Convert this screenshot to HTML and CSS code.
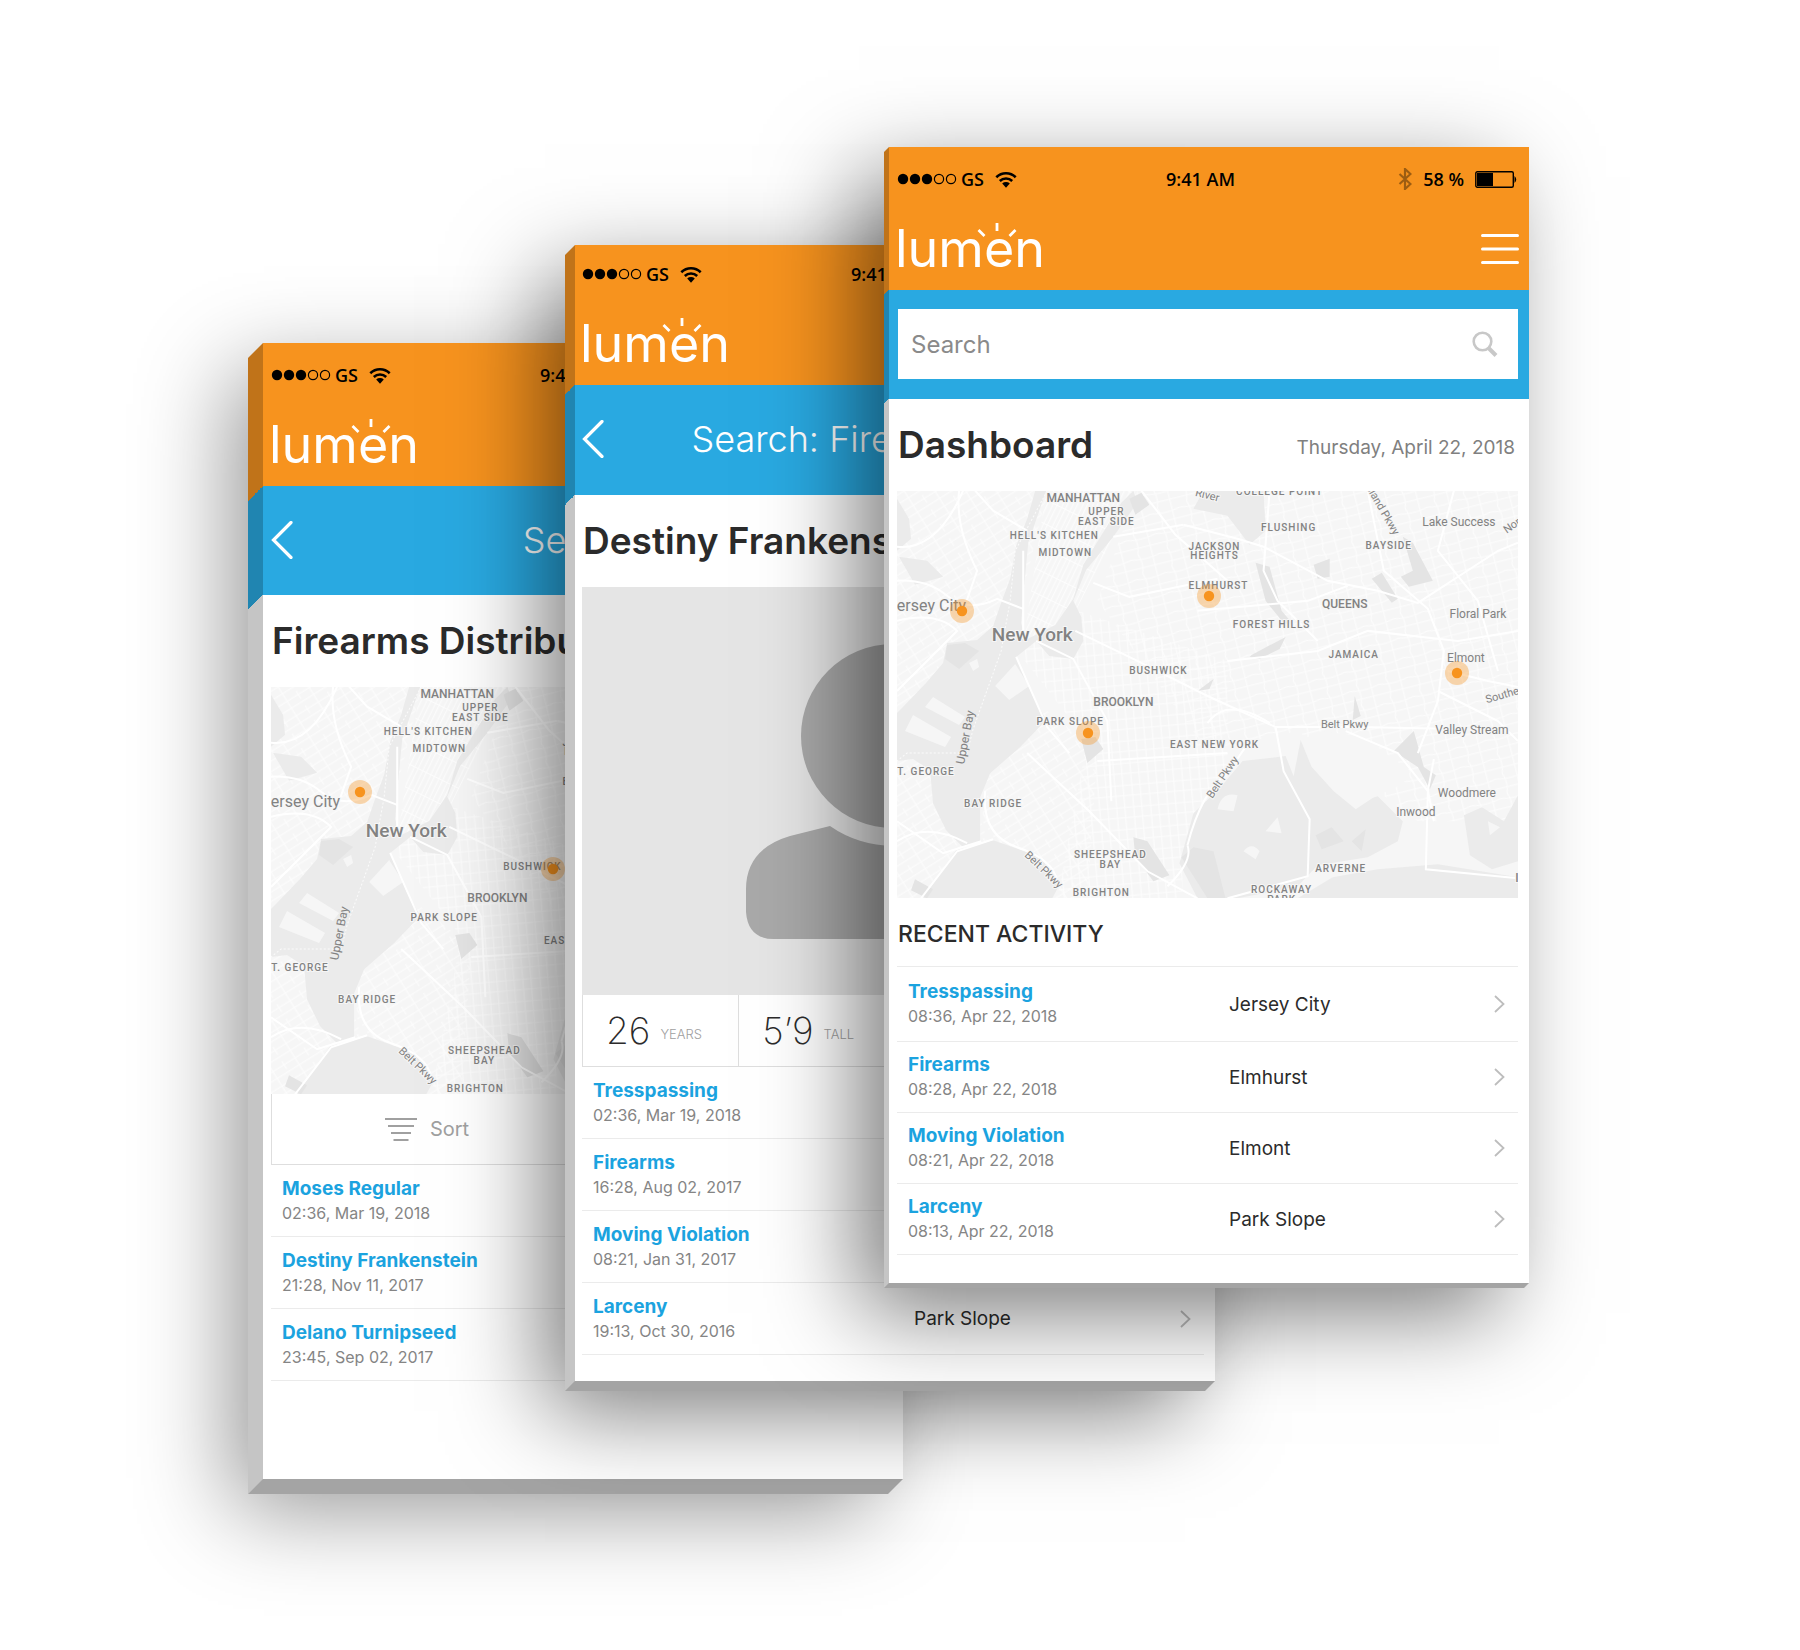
FILE: index.html
```html
<!DOCTYPE html>
<html lang="en">
<head>
<meta charset="utf-8">
<meta name="viewport" content="width=device-width, initial-scale=1">
<title>Lumen mobile screens</title>
<link rel="stylesheet" href="styles.css">
</head>
<body>

<svg class="sprite" aria-hidden="true">
  <defs>
    <symbol id="i-signal" viewBox="0 0 60 12">
      <circle cx="6" cy="6" r="5.2"/><circle cx="18" cy="6" r="5.2"/><circle cx="30" cy="6" r="5.2"/>
      <g fill="none" stroke="currentColor" stroke-width="1.2"><circle cx="42" cy="6" r="4.6"/><circle cx="54" cy="6" r="4.6"/></g>
    </symbol>
    <symbol id="i-wifi" viewBox="0 0 22 17">
      <g fill="none" stroke="currentColor" stroke-width="2.6"><path d="M1.3 6.2a14 14 0 0 1 19.4 0"/><path d="M4.8 10a9 9 0 0 1 12.4 0"/></g>
      <path d="M7.2 12.6a5.6 5.6 0 0 1 7.6 0L11 16.8z"/>
    </symbol>
    <symbol id="i-bluetooth" viewBox="0 0 14 22">
      <path d="M1.5 6l11 10L7 21V1l5.500 5L1.500 16" fill="none" stroke="currentColor" stroke-width="2.200"/>
    </symbol>
    <symbol id="i-battery" viewBox="0 0 43 17">
      <rect x=".8" y=".8" width="37.500" height="15.400" rx="1.500" fill="none" stroke="currentColor" stroke-width="1.400"/>
      <rect x="2" y="2" width="16" height="13"/><path d="M39.500 5q3.500 3.500 0 7z"/>
    </symbol>
    <symbol id="i-rays" viewBox="0 0 40 18">
      <path d="M20 1v8M1.500 8l6 6M38.500 8l-6 6" fill="none" stroke="currentColor" stroke-width="2.800"/>
    </symbol>
    <symbol id="i-menu" viewBox="0 0 38 32">
      <path d="M1.500 2.500h35M1.500 16h35M1.500 29.500h35" stroke="currentColor" stroke-width="3" stroke-linecap="round"/>
    </symbol>
    <symbol id="i-back" viewBox="0 0 22 38">
      <path d="M20 1.500L2.500 19 20 36.500" fill="none" stroke="currentColor" stroke-width="3.200" stroke-linecap="round"/>
    </symbol>
    <symbol id="i-next" viewBox="0 0 11 18">
      <path d="M1 1l8.500 8L1 17" fill="none" stroke="currentColor" stroke-width="1.800"/>
    </symbol>
    <symbol id="i-search" viewBox="0 0 26 26">
      <circle cx="10.500" cy="10.500" r="8.800" fill="none" stroke="currentColor" stroke-width="2.600"/>
      <path d="M16.500 17l7.500 7.500" stroke="currentColor" stroke-width="4"/>
    </symbol>
    <symbol id="i-sort" viewBox="0 0 32 24">
      <path d="M0 2h32M3 9h26M6 16h20M8.500 23h15" stroke="currentColor" stroke-width="2"/>
    </symbol>

    <pattern id="streets-a" width="26" height="17" patternUnits="userSpaceOnUse" patternTransform="rotate(-32)">
      <path d="M0 4h26M0 12h26M6 0v17M19 0v9" class="street"/>
    </pattern>
    <pattern id="streets-b" width="17" height="22" patternUnits="userSpaceOnUse" patternTransform="rotate(-5)">
      <path d="M0 5h17M0 15h17M4 0v22M12 0v22" class="street"/>
    </pattern>
    <pattern id="streets-c" width="9" height="22" patternUnits="userSpaceOnUse" patternTransform="rotate(26)">
      <path d="M0 9h9M2 0v22M6 0v22" class="street"/>
    </pattern>
    <pattern id="streets-d" width="30" height="20" patternUnits="userSpaceOnUse" patternTransform="rotate(-14)">
      <path d="M0 4q15 4 30 0M0 14h30M8 0q4 10 0 20M22 0v20" class="street"/>
    </pattern>

    <symbol id="city-map" viewBox="0 0 620 407" preserveAspectRatio="xMidYMid slice">
      <rect width="620" height="407" fill="#f6f6f6"/>
      <path d="M0 0H150L112 160 0 230z" fill="url(#streets-a)"/>
      <path d="M0 260H60L110 407H0z" fill="url(#streets-a)"/>
      <path d="M149 0H240L176 125 126 152z" fill="url(#streets-c)"/>
      <path d="M90 260L150 220 200 260 190 407H140L85 330z" fill="url(#streets-a)"/>
      <path d="M120 160L180 120 330 170 330 300 285 360 285 407H160L190 250z" fill="url(#streets-b)"/>
      <path d="M240 0H620V330H520L400 240 310 260 200 110z" fill="url(#streets-d)"/>

      <g fill="#ebebeb">
        <path d="M138 0L130 28 119 55 113 88 104 112 96 135 80 149 50 152 46 172 29 192 3 219 0 222V270L16 268 33 279 36 312 49 339 66 356 83 352 83 306 93 282 123 256 149 229 136 206 119 166 139 150 152 165 176 168 186 150 184 126 176 110 189 79 216 46 240 12 236 0 224 12 186 74 176 108 158 134 128 149 124 132 126 106 131 52 149 0z"/>
        <path d="M96 349L59 359 26 407H155L163 392 143 366 116 356z"/>
        <path d="M282 372L296 322 323 296 345 270 388 265 396 285 403 249 430 290 455 312 480 305 505 330 500 350 470 366 420 374 400 395 340 407H300z"/>
        <path d="M400 407L435 386 480 378 540 373 620 386V407z"/>
        <path d="M306 0H366L368 40 352 54 330 25 296 18z"/>
        <path d="M566 324l18-8 22 14 14-26v66l-26 8-22-14z"/>
        <path d="M0 8l12 20 2 20L0 60zM2 66l28 4 16 16-28 8z"/>
      </g>
      <g fill="#e4e4e4">
        <path d="M50 154l18-2 14 8-20 18-14-10zM284 366l12-10 20 4 12 47h-18z"/>
        <path d="M358 72l14 4 12 44 12 14-10-2-18-22zM416 74l16-6v18l-12 2zM474 88l10-6 16 26-6 4zM505 46l10 6 20 38-24 6-8-10 12-6z"/>
        <path d="M354 164l34-18-6 12-20 10-10-2zM300 200l16-12-4 10zM184 248l14-2 8 12-16 14z"/>
        <path d="M496 260l20-20 10 36 12 8-6 14-12-22zM236 346l14 4 22 34-16 6-18-24zM18 388l18 10-6 9-16-8zM457 205l6 20-8 4zM232 8l12-6 8 12-14 10z"/>
        <path d="M424 358l-6-14 16-8 12 14zM454 350l14-12-4 22z"/>
      </g>
      <g fill="#f6f6f6">
        <path d="M8 240l40 16 6-10-38-22zM28 216l34 18 6-8-32-20zM98 195l20-22 14 22-20 14zM72 172l8-4 2 8-6 4z"/>
        <path d="M403 249L424 240 466 246 512 280 506 292 476 306 458 318 436 300 414 276z"/>
        <path d="M320 318q4-18 20-14l-4 16zM346 360q8-10 16 0l-4 8zM368 340l12-14 4 16zM590 330l12 6-10 8z"/>
      </g>

      <g class="road">
        <path d="M-2 90Q30 88 50 105T100 108L126 118M0 56Q40 60 66 0M78 0L96 20 130 40M62 0Q58 36 80 80L66 120M0 130Q40 120 60 140L0 200"/>
        <path d="M126 60V148M119 166L150 236 172 262M96 348L60 360 24 407M0 330L46 362 84 350"/>
        <path d="M139 150L176 168 210 230 214 310M196 92L232 106 262 100 320 88M216 46L286 34"/>
        <path d="M178 140L240 170 310 205 378 236 460 236 560 238M0 350Q30 330 70 352"/>
        <path d="M286 34L340 48 366 56 430 90 480 100 520 112 600 60 620 52M372 0L366 80 380 110 420 150M470 0L486 80 530 118 546 160 540 210 520 262"/>
        <path d="M244 0L278 44 330 90M300 120L410 110 450 95M330 170L420 160 470 140 560 150 620 140M310 232Q330 205 372 232"/>
        <path d="M378 236L386 280 412 328 410 385 330 407M536 268L530 300 528 378 620 387M448 240L500 262 530 300 536 330"/>
        <path d="M540 200L600 230 620 250M550 180L590 190 620 196M556 0L540 60 580 110 600 180M290 354Q304 300 330 282L352 250M270 395Q296 370 290 354"/>
        <path d="M88 300Q84 344 120 356T160 390M130 262L192 320 250 380 300 407M200 270L330 262"/>
      </g>
      <path d="M150 0L118 60 113 110 104 160 76 238 70 262H10L0 270" class="ferry"/>

      <g class="area" text-anchor="middle">
        <text x="209" y="24">UPPER</text><text x="209" y="34">EAST SIDE</text>
        <text x="157" y="48">HELL'S KITCHEN</text><text x="168" y="65">MIDTOWN</text>
        <text x="261" y="183">BUSHWICK</text><text x="173" y="234">PARK SLOPE</text>
        <text x="317" y="257">EAST NEW YORK</text><text x="29" y="284">T. GEORGE</text>
        <text x="96" y="316">BAY RIDGE</text><text x="213" y="367">SHEEPSHEAD</text><text x="213" y="377">BAY</text>
        <text x="204" y="405">BRIGHTON</text><text x="382" y="4">COLLEGE POINT</text>
        <text x="391" y="40">FLUSHING</text><text x="317" y="59">JACKSON</text><text x="317" y="68">HEIGHTS</text>
        <text x="321" y="98">ELMHURST</text><text x="491" y="58">BAYSIDE</text>
        <text x="374" y="137">FOREST HILLS</text><text x="456" y="167">JAMAICA</text>
        <text x="443" y="381">ARVERNE</text><text x="384" y="402">ROCKAWAY</text><text x="384" y="412">PARK</text>
      </g>
      <g class="borough" text-anchor="middle">
        <text x="186" y="11">MANHATTAN</text><text x="226" y="215">BROOKLYN</text><text x="447" y="117">QUEENS</text>
        <text x="619" y="391">I</text>
      </g>
      <g class="town" text-anchor="middle">
        <text x="561" y="35">Lake Success</text><text x="580" y="127">Floral Park</text><text x="568" y="171">Elmont</text>
        <text x="574" y="243">Valley Stream</text><text x="569" y="306">Woodmere</text><text x="518" y="325">Inwood</text>
      </g>
      <text x="69" y="120" class="city" text-anchor="end">ersey City</text>
      <text x="135" y="150" class="metro" text-anchor="middle">New York</text>
      <g class="way" text-anchor="middle">
        <text transform="translate(72 247) rotate(-79)" class="bay">Upper Bay</text>
        <text transform="translate(447 237)">Belt Pkwy</text>
        <text transform="translate(328 288) rotate(-56)">Belt Pkwy</text>
        <text transform="translate(144 381) rotate(44)">Belt Pkwy</text>
        <text transform="translate(309 8) rotate(14)">River</text>
        <text transform="translate(482 21) rotate(60)">sland Pkwy</text>
        <text transform="translate(616 38) rotate(-35)">Nor</text>
        <text transform="translate(607 207) rotate(-16)">Souther</text>
      </g>
    </symbol>
    <symbol id="pin" viewBox="0 0 24 24">
      <circle cx="12" cy="12" r="12" fill="#f7931e" fill-opacity=".35"/><circle cx="12" cy="12" r="5.200" fill="#f7931e"/>
    </symbol>
  </defs>
</svg>

<main class="stage">

  <section class="phone phone--back" aria-label="Firearms distribution">
    <div class="screen">
      <div class="status">
        <span class="status-group"><svg class="signal"><use href="#i-signal"/></svg>GS<svg class="wifi"><use href="#i-wifi"/></svg></span>
        <span>9:41</span>
        <span class="status-group status-end"><svg class="battery"><use href="#i-battery"/></svg></span>
      </div>
      <header class="brand">
        <a class="logo" href="#">lumen<svg class="rays" aria-hidden="true"><use href="#i-rays"/></svg></a>
        <button class="icon-button" aria-label="Menu"><svg class="menu"><use href="#i-menu"/></svg></button>
      </header>
      <nav class="bar">
        <button class="icon-button" aria-label="Back"><svg class="back"><use href="#i-back"/></svg></button>
        <span class="bar-title">Search</span>
      </nav>
      <div class="heading"><h1>Firearms Distribution</h1></div>
      <div class="content">
        <div class="map">
          <svg class="map-canvas" role="img" aria-label="Map of New York"><use href="#city-map"/></svg>
          <svg class="pin pin--hoboken"><use href="#pin"/></svg>
          <svg class="pin pin--bushwick"><use href="#pin"/></svg>
        </div>
        <div class="cells cells--two">
          <button class="cell tool"><svg class="sort"><use href="#i-sort"/></svg>Sort</button>
          <div class="cell"></div>
        </div>
        <ul class="rows">
          <li><a class="row" href="#"><span class="event"><strong>Moses Regular</strong><small>02:36, Mar 19, 2018</small></span></a></li>
          <li><a class="row" href="#"><span class="event"><strong>Destiny Frankenstein</strong><small>21:28, Nov 11, 2017</small></span></a></li>
          <li><a class="row" href="#"><span class="event"><strong>Delano Turnipseed</strong><small>23:45, Sep 02, 2017</small></span></a></li>
        </ul>
      </div>
    </div>
  </section>

  <section class="phone phone--middle" aria-label="Destiny Frankenstein">
    <div class="screen">
      <div class="status">
        <span class="status-group"><svg class="signal"><use href="#i-signal"/></svg>GS<svg class="wifi"><use href="#i-wifi"/></svg></span>
        <span>9:41</span>
        <span class="status-group status-end"><svg class="battery"><use href="#i-battery"/></svg></span>
      </div>
      <header class="brand">
        <a class="logo" href="#">lumen<svg class="rays" aria-hidden="true"><use href="#i-rays"/></svg></a>
        <button class="icon-button" aria-label="Menu"><svg class="menu"><use href="#i-menu"/></svg></button>
      </header>
      <nav class="bar">
        <button class="icon-button" aria-label="Back"><svg class="back"><use href="#i-back"/></svg></button>
        <span class="bar-title">Search: Firearms Dealer</span>
      </nav>
      <div class="heading"><h1>Destiny Frankenstein</h1></div>
      <div class="content">
        <svg class="portrait" viewBox="0 0 622 408" role="img" aria-label="No photo">
          <circle cx="311" cy="149" r="92"/>
          <path d="M248 239L208 249Q164 262 164 302V325Q166 352 192 352H430Q456 352 458 325V302Q458 262 414 249L374 239A110 110 0 0 1 248 239z"/>
        </svg>
        <div class="cells">
          <div class="cell stat"><b>26</b><span>YEARS</span></div>
          <div class="cell stat"><b>5’9</b><span>TALL</span></div>
          <div class="cell"></div>
          <div class="cell"></div>
        </div>
        <ul class="rows">
          <li><a class="row" href="#"><span class="event"><strong>Tresspassing</strong><small>02:36, Mar 19, 2018</small></span></a></li>
          <li><a class="row" href="#"><span class="event"><strong>Firearms</strong><small>16:28, Aug 02, 2017</small></span></a></li>
          <li><a class="row" href="#"><span class="event"><strong>Moving Violation</strong><small>08:21, Jan 31, 2017</small></span></a></li>
          <li><a class="row" href="#"><span class="event"><strong>Larceny</strong><small>19:13, Oct 30, 2016</small></span><span class="place">Park Slope</span><svg class="next"><use href="#i-next"/></svg></a></li>
        </ul>
      </div>
    </div>
  </section>

  <section class="phone phone--front" aria-label="Dashboard">
    <div class="screen">
      <div class="status">
        <span class="status-group"><svg class="signal"><use href="#i-signal"/></svg>GS<svg class="wifi"><use href="#i-wifi"/></svg></span>
        <span>9:41 AM</span>
        <span class="status-group status-end"><svg class="bluetooth"><use href="#i-bluetooth"/></svg>58 %<svg class="battery"><use href="#i-battery"/></svg></span>
      </div>
      <header class="brand">
        <a class="logo" href="#">lumen<svg class="rays" aria-hidden="true"><use href="#i-rays"/></svg></a>
        <button class="icon-button" aria-label="Menu"><svg class="menu"><use href="#i-menu"/></svg></button>
      </header>
      <form class="bar">
        <label class="search"><input type="search" placeholder="Search" aria-label="Search"><svg class="search-icon"><use href="#i-search"/></svg></label>
      </form>
      <div class="heading"><h1>Dashboard</h1><time datetime="2018-04-22">Thursday, April 22, 2018</time></div>
      <div class="content">
        <div class="map">
          <svg class="map-canvas" role="img" aria-label="Map of New York"><use href="#city-map"/></svg>
          <svg class="pin pin--jersey"><use href="#pin"/></svg>
          <svg class="pin pin--elmhurst"><use href="#pin"/></svg>
          <svg class="pin pin--slope"><use href="#pin"/></svg>
          <svg class="pin pin--elmont"><use href="#pin"/></svg>
        </div>
        <h2>RECENT ACTIVITY</h2>
        <ul class="rows rows--ruled">
          <li><a class="row" href="#"><span class="event"><strong>Tresspassing</strong><small>08:36, Apr 22, 2018</small></span><span class="place">Jersey City</span><svg class="next"><use href="#i-next"/></svg></a></li>
          <li><a class="row" href="#"><span class="event"><strong>Firearms</strong><small>08:28, Apr 22, 2018</small></span><span class="place">Elmhurst</span><svg class="next"><use href="#i-next"/></svg></a></li>
          <li><a class="row" href="#"><span class="event"><strong>Moving Violation</strong><small>08:21, Apr 22, 2018</small></span><span class="place">Elmont</span><svg class="next"><use href="#i-next"/></svg></a></li>
          <li><a class="row" href="#"><span class="event"><strong>Larceny</strong><small>08:13, Apr 22, 2018</small></span><span class="place">Park Slope</span><svg class="next"><use href="#i-next"/></svg></a></li>
        </ul>
      </div>
    </div>
  </section>

</main>
</body>
</html>
```
FILE: styles.css
```css
:root {
  --orange: #f7931e;
  --blue: #29a9e1;
  --ink: #2b2b2b;
  --rule: #ebebeb;
}

* { box-sizing: border-box; }

body {
  margin: 0;
  background: #fff;
  color: var(--ink);
  font-family: Inter, "Liberation Sans", sans-serif;
}

a { color: inherit; text-decoration: none; }
button { border: 0; padding: 0; background: none; color: inherit; font: inherit; }
svg { display: block; fill: currentColor; }
.sprite { position: absolute; width: 0; height: 0; }

/* Three slabs stepping up to the right */
.stage {
  display: flex;
  justify-content: center;
  align-items: flex-start;
  min-height: 100vh;
  padding: 147px 8px 147px 0;
}

.phone {
  --depth: 5px;
  --inset: 8px;
  --status: 64px;
  --brand: 79px;
  --brand-line: 76px;
  --bar: 109px;
  --shade: .52;
  position: relative;
  flex: none;
  width: 640px;
}
.phone--back { --depth: 15px; --shade: .42; margin-top: 196px; }
.phone--middle {
  --depth: 10px;
  --inset: 7px;
  --status: 58px;
  --brand: 82px;
  --brand-line: 82px;
  --bar: 110px;
  margin-top: 98px;
  margin-left: -328px;
}
.phone--front { margin-left: -326px; }

.screen {
  min-height: 1136px;
  background: #fff;
  box-shadow: -30px 30px 88px rgba(0, 0, 0, var(--shade));
}

/* Slab edges: left side carries the header bands, bottom is plain */
.phone::before,
.phone::after { content: ""; position: absolute; }
.phone::before {
  top: 0;
  right: 100%;
  width: var(--depth);
  height: 100%;
  transform: skewY(-45deg);
  transform-origin: 100% 0;
  background: linear-gradient(
    #c07319 calc(var(--status) + var(--brand)),
    #2085b1 calc(var(--status) + var(--brand)),
    #2085b1 calc(var(--status) + var(--brand) + var(--bar)),
    #c5c5c5 calc(var(--status) + var(--brand) + var(--bar)));
}
.phone::after {
  top: 100%;
  left: 0;
  width: 100%;
  height: var(--depth);
  transform: skewX(-45deg);
  transform-origin: 0 0;
  background: #a4a4a4;
}

.status {
  display: grid;
  grid-template-columns: 269px auto 1fr;
  align-items: center;
  height: var(--status);
  padding: 0 11px 0 var(--inset);
  background: var(--orange);
  color: #000;
  font: 600 18px/24px "Open Sans", "Noto Sans", sans-serif;
}
.status-group { display: flex; align-items: center; gap: 4px; }
.status-end { justify-content: flex-end; gap: 11px; }
.signal { width: 60px; height: 12px; }
.wifi { width: 22px; height: 17px; margin-left: 7px; }
.bluetooth { width: 14px; height: 22px; color: #9c5d12; }
.battery { width: 43px; height: 17px; }

.brand {
  display: flex;
  justify-content: space-between;
  align-items: flex-start;
  height: var(--brand);
  padding: 0 10px 0 calc(var(--inset) - 2px);
  background: var(--orange);
  color: #fff;
}
.logo { position: relative; font-size: 52px; line-height: var(--brand-line); }
.rays { position: absolute; left: 82px; top: calc(50% - 27px); width: 40px; height: 18px; }
.icon-button { display: block; }
.brand .icon-button { display: flex; align-items: center; height: var(--brand-line); }
.menu { width: 38px; height: 32px; }

.bar {
  display: flex;
  align-items: center;
  height: var(--bar);
  padding: 0 11px 2px var(--inset);
  background: var(--blue);
  color: #fff;
}
.back { width: 22px; height: 38px; }
.bar-title { flex: 1; margin-right: 22px; text-align: center; font-size: 36px; font-weight: 300; line-height: 44px; }

.search {
  display: flex;
  align-items: center;
  width: 100%;
  height: 70px;
  margin-left: 1px;
  padding: 0 20px 0 13px;
  background: #fff;
}
.search input {
  flex: 1;
  min-width: 0;
  border: 0;
  padding: 2px 0 0;
  outline: 0;
  background: none;
  color: var(--ink);
  font: 24px/32px Inter, "Liberation Sans", sans-serif;
}
.search input::placeholder { color: #8a8a8a; opacity: 1; }
.search-icon { width: 26px; height: 26px; color: #c8c8c8; }

.heading {
  display: flex;
  justify-content: space-between;
  align-items: center;
  height: 92px;
  padding: 0 14px 0 calc(var(--inset) + 1px);
}
h1 { margin: 0; font-size: 37px; font-weight: 600; line-height: 44px; white-space: nowrap; }
.heading time { padding-top: 6px; color: #808080; font-size: 19px; line-height: 24px; }

.content { padding: 0 11px 0 var(--inset); }

.map { position: relative; height: 407px; overflow: hidden; }
.map-canvas { width: 100%; height: 100%; }
.pin { position: absolute; width: 24px; height: 24px; transform: translate(-50%, -50%); }
.pin--jersey { left: 65px; top: 120px; }
.pin--elmhurst { left: 312px; top: 105px; }
.pin--slope { left: 191px; top: 242px; }
.pin--elmont { left: 560px; top: 182px; }
.pin--hoboken { left: 89px; top: 105px; }
.pin--bushwick { left: 282px; top: 182px; }

.street { fill: none; stroke: #fdfdfd; stroke-width: 1; }
.road { fill: none; stroke: #fff; stroke-width: 2; }
.ferry { fill: none; stroke: #fbfbfb; stroke-width: 1; stroke-dasharray: 2 2; }
.area, .borough, .town, .city, .metro, .way {
  fill: #828282;
  stroke: #f6f6f6;
  stroke-width: 2px;
  paint-order: stroke;
  font-family: Roboto, sans-serif;
}
.area { font-size: 10px; font-weight: 500; letter-spacing: 1px; }
.borough { font-size: 12px; font-weight: 500; }
.town { font-size: 12px; }
.city { font-size: 16px; }
.metro { font-size: 19px; font-weight: 500; }
.way { font-size: 11px; }
.bay { font-size: 12px; stroke: none; }

.portrait { width: 100%; height: auto; background: #e5e5e5; color: #a9a9a9; }

.cells {
  display: grid;
  grid-template-columns: repeat(4, minmax(0, 1fr));
  height: 72px;
  border: solid #dedede;
  border-width: 0 0 1px 1px;
}
.cells--two { grid-template-columns: repeat(2, minmax(0, 1fr)); height: 71px; }
.cell { display: flex; align-items: center; }
.cell + .cell { border-left: 1px solid #dedede; }
.tool { justify-content: center; gap: 13px; color: #a0a0a0; font-size: 20px; }
.sort { width: 32px; height: 24px; }
.stat { gap: 10px; padding-left: 23px; white-space: nowrap; }
.stat b { font-size: 37px; font-weight: 200; line-height: 44px; }
.stat span { padding-top: 6px; color: #a0a0a0; font-size: 13px; font-weight: 300; }

h2 { margin: 0; padding: 24px 0 20px 1px; font-size: 23px; font-weight: 500; line-height: 24px; }

.rows { margin: 0; padding: 0; list-style: none; }
.row {
  display: grid;
  grid-template-columns: 321px 1fr auto;
  align-items: center;
  height: 72px;
  padding: 0 13px 0 11px;
  border-bottom: 1px solid var(--rule);
}
.rows--ruled { border-top: 1px solid var(--rule); }
.rows--ruled .row { height: 71px; }
.rows--ruled li:first-child .row { height: 75px; }
.event strong, .event small { display: block; line-height: 24px; }
.event strong { color: #1ba3df; font-size: 19px; font-weight: 700; }
.event small { color: #858585; font-size: 16px; }
.place { font-size: 19px; }
.next { width: 11px; height: 18px; color: #bdbdbd; }
```
